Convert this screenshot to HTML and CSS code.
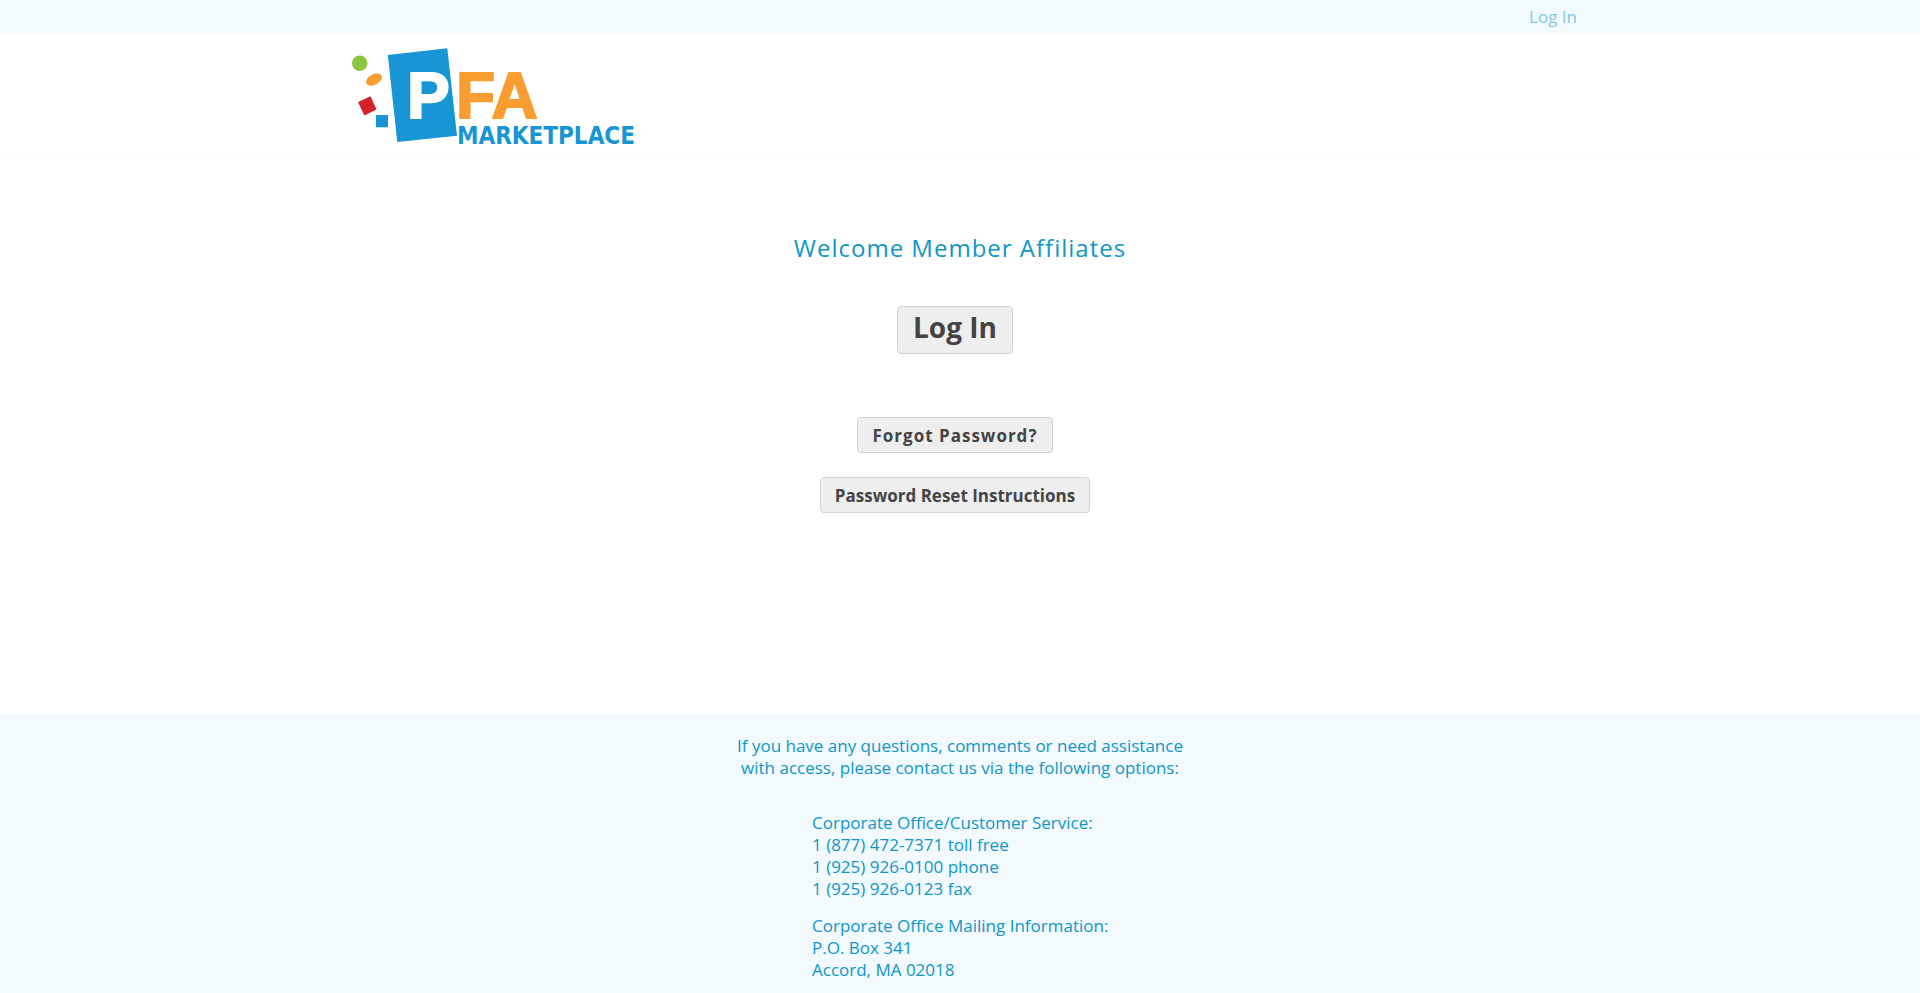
FILE: index.html
```html
<!DOCTYPE html>
<html lang="en">
<head>
<meta charset="utf-8">
<meta name="viewport" content="width=device-width, initial-scale=1">
<title>PFA Marketplace</title>
<link rel="stylesheet" href="styles.css">
</head>
<body>
<div class="topbar">
  <nav class="container topbar-nav"><a class="topbar-link" href="#login">Log In</a></nav>
</div>
<header class="header">
  <div class="container">
    <a class="logo-link" href="#">
      <svg class="logo" viewBox="0 14 300 108" width="300" height="108" role="img" aria-label="PFA Marketplace">
        <circle cx="19.7" cy="33.3" r="7.8" fill="#8cc63f"/>
        <ellipse cx="34" cy="49.6" rx="8.6" ry="5.2" transform="rotate(-27 34 49.6)" fill="#f99d31"/>
        <path d="M18 72l12.5-5.8 6 13.3-12.2 6z" fill="#d2232a"/>
        <path d="M36 85h12v12.300H36z" fill="#1795d4"/>
        <path d="M47.800 25L107.300 18.200 117 105.700 57.300 112z" fill="#1795d4"/>
        <text class="logo-letter logo-white" x="67" y="88">P</text>
        <text class="logo-letter logo-orange" x="116" y="88">FA</text>
        <text class="logo-name" x="117" y="114">MARKETPLACE</text>
      </svg>
    </a>
  </div>
</header>
<main class="main">
  <h1 class="welcome">Welcome Member Affiliates</h1>
  <div class="actions">
    <button class="button button-large" type="button">Log In</button>
    <button class="button button-spaced" type="button">Forgot Password?</button>
    <button class="button" type="button">Password Reset Instructions</button>
  </div>
</main>
<footer class="footer">
  <p class="footer-intro">If you have any questions, comments or need assistance<br>with access, please contact us via the following options:</p>
  <address class="contact">
    <p class="contact-block">Corporate Office/Customer Service:<br>1 (877) 472-7371 toll free<br>1 (925) 926-0100 phone<br>1 (925) 926-0123 fax</p>
    <p class="contact-block">Corporate Office Mailing Information:<br>P.O. Box 341<br>Accord, MA 02018</p>
  </address>
</footer>
</body>
</html>
```

FILE: styles.css
```css
* { box-sizing: border-box; }
html { height: 100%; }
body {
  display: flex;
  flex-direction: column;
  min-height: 100%;
  margin: 0;
  background: #fff;
  color: #0f96c8;
  font-family: "Open Sans", sans-serif;
  font-size: 17px;
  line-height: 22px;
}
.container { width: 100%; max-width: 1240px; margin: 0 auto; }
.topbar { background: #f2fafd; }
.topbar-nav { display: flex; justify-content: flex-end; padding: 6px 3px; }
.topbar-link { color: #85c8e3; text-decoration: none; }
.header { padding: 10px 0 3px; border-bottom: 1px solid #f7f9fa; }
.logo-link, .logo { display: block; }
.logo-link { width: 300px; }
.logo-letter { font: bold 64px "Liberation Sans", Arial, sans-serif; stroke-width: 2px; }
.logo-white { fill: #fff; stroke: #fff; }
.logo-orange { fill: #f99d31; stroke: #f99d31; }
.logo-name { font: bold 24px "DejaVu Sans Condensed", "DejaVu Sans", sans-serif; fill: #1795d4; }
.main { flex: 1; padding: 76px 20px 199px; }
.welcome {
  margin: 0 0 42px;
  font-size: 24px;
  font-weight: 400;
  line-height: 32px;
  letter-spacing: 1px;
  text-align: center;
}
.actions { display: flex; flex-direction: column; align-items: center; gap: 24px; padding-right: 10px; }
.button {
  height: 36px;
  padding: 1px 14px 0;
  border: 1px solid #d3d3d3;
  border-radius: 4px;
  background: #eee;
  color: #444;
  font: bold 17px/24px "Open Sans", sans-serif;
  cursor: pointer;
}
.button-large { height: 48px; margin-bottom: 39px; padding: 0 15px 6px; font-size: 28px; line-height: 36px; }
.button-spaced { letter-spacing: 1px; }
.footer { padding: 22px 20px 12px; background: #f2fafd; }
.footer-intro { margin: 0 0 33px; text-align: center; }
.contact { width: 100%; max-width: 296px; margin: 0 auto; font-style: normal; white-space: nowrap; }
.contact-block { margin: 0 0 15px; }
.contact-block:last-child { margin-bottom: 0; }
```
